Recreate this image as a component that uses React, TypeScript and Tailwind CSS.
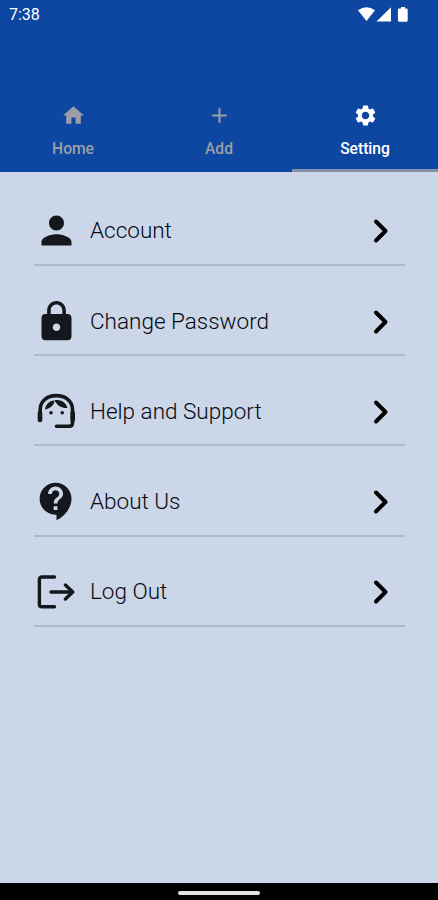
import React from "react";
import { MdAdd, MdContactSupport, MdHome, MdLock, MdPerson, MdSettings } from "react-icons/md";

const SupportIcon: React.FC = () => (
  <svg viewBox="0 1 45 45" className="h-[45px] w-[45px]" fill="none">
    <path
      d="M6.2 23V21.5C6.2 12.8 13.4 7.6 22.3 7.6S38.5 12.8 38.5 21.5V35Q38.5 38.2 35.5 38.2H22.5"
      stroke="currentColor"
      strokeWidth="3.6"
      strokeLinecap="round"
    />
    <path d="M6 25v7M38.7 25v7" stroke="currentColor" strokeWidth="4.6" strokeLinecap="round" />
    <path d="M11 21.6C11.4 17 15 12.8 20.5 12.6C20.4 16.6 16.5 20.8 11 21.6z" fill="currentColor" />
    <path d="M20.5 12.3C26 11 31.8 13.8 33.5 20C29 20.6 23.5 18.5 20.5 12.3z" fill="currentColor" />
    <circle cx="17" cy="24.8" r="1.8" fill="currentColor" />
    <circle cx="28.2" cy="24.8" r="1.8" fill="currentColor" />
  </svg>
);

const LogOutIcon: React.FC = () => (
  <svg
    viewBox="0 0 45 45"
    className="h-[45px] w-[45px]"
    fill="none"
    stroke="currentColor"
    strokeWidth="3.4"
    strokeLinecap="round"
    strokeLinejoin="round"
  >
    <path d="M20.5 8H8Q5.4 8 5.4 10.6V35.2Q5.4 37.8 8 37.8H20.5" />
    <path d="M17 23H38.4M31.4 16L38.8 23L31.4 30" />
  </svg>
);

const tabs = [
  { label: "Home", icon: <MdHome size={25} />, active: false },
  { label: "Add", icon: <MdAdd size={25} />, active: false },
  { label: "Setting", icon: <MdSettings size={25} />, active: true },
];

const items = [
  { label: "Account", icon: <MdPerson size={45} /> },
  { label: "Change Password", icon: <MdLock size={45} /> },
  { label: "Help and Support", icon: <SupportIcon /> },
  { label: "About Us", icon: <MdContactSupport size={45} /> },
  { label: "Log Out", icon: <LogOutIcon /> },
];

const App: React.FC = () => {
  return (
    <div className="flex h-[900px] w-[438px] flex-col overflow-hidden bg-[#cbd6e8] font-['Roboto',sans-serif]">
      <header className="flex h-[172px] shrink-0 flex-col bg-[#0d47a1]">
        {/* status bar */}
        <div className="flex h-7 items-center justify-between pl-[9px] pr-[29px] pt-0.5 text-white">
          <span className="text-base leading-7">7:38</span>
          <svg width="51" height="16" viewBox="0 0 51 16" fill="currentColor">
            <path d="M0 3.3Q8.5 -2.6 17 3.3L8.5 14z" />
            <path d="M33 .2V14.5H18.5z" />
            <path d="M43 0h4v1.4h1.6q1.1 0 1.1 1.1V13.6q0 1.1-1.1 1.1H41q-1.1 0-1.1-1.1V2.5q0-1.1 1.1-1.1h2z" />
          </svg>
        </div>

        <nav className="mt-auto grid h-[72px] grid-cols-3">
          {tabs.map((tab) => (
            <div
              key={tab.label}
              className={`flex flex-col items-center border-b-[3px] pt-[2.5px] ${
                tab.active ? "border-[#8591ad] text-white" : "border-transparent text-[#9b9fa5]"
              }`}
            >
              {tab.icon}
              <span className="mt-[11px] text-[15.6px] font-medium leading-5">{tab.label}</span>
            </div>
          ))}
        </nav>
      </header>

      <main className="flex-1 pl-[34px] pr-[33px] pt-[3.5px]">
        {items.map((item) => (
          <div
            key={item.label}
            className="flex h-[90.3px] items-end border-b-2 border-[#b0bacd] pb-[10.5px] text-[#14181c]"
          >
            <div className="w-14 shrink-0">{item.icon}</div>
            <span className="text-[22.5px] font-light leading-[45px] text-[#05090f]">{item.label}</span>
            <svg
              viewBox="0 0 20 45"
              className="ml-auto mr-[14px] h-[45px] w-5 text-black"
              fill="none"
              stroke="currentColor"
              strokeWidth="4"
              strokeLinecap="round"
              strokeLinejoin="round"
            >
              <path d="M5 13.5L14.5 23L5 32.5" />
            </svg>
          </div>
        ))}
      </main>

      <footer className="flex h-[17px] shrink-0 items-center justify-center bg-black">
        <div className="mt-0.5 h-1 w-[82px] rounded-full bg-[#e4e4e0]" />
      </footer>
    </div>
  );
};

export default App;
